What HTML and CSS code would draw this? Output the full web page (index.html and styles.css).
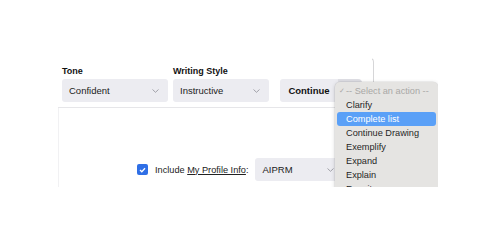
FILE: index.html
```html
<!DOCTYPE html>
<html lang="en">
<head>
  <meta charset="UTF-8">
  <title>Prompt Options</title>
  <link rel="stylesheet" href="styles.css">
</head>
<body>
  <div class="panel">
    <div class="toolbar">
      <div class="field">
        <label>Tone</label>
        <div class="select tone">
          <span>Confident</span>
          <svg class="chev" width="7" height="4" viewBox="0 0 7 4"><path d="M0.5 0.5 L3.5 3.3 L6.5 0.5" fill="none" stroke="#9a9aa2" stroke-width="0.9"/></svg>
        </div>
      </div>
      <div class="field">
        <label>Writing Style</label>
        <div class="select style">
          <span>Instructive</span>
          <svg class="chev" width="7" height="4" viewBox="0 0 7 4"><path d="M0.5 0.5 L3.5 3.3 L6.5 0.5" fill="none" stroke="#9a9aa2" stroke-width="0.9"/></svg>
        </div>
      </div>
      <div class="continue">
        <button class="go">Continue</button>
        <button class="more"></button>
      </div>
      <div class="edge"></div>
    </div>

    <div class="lower">
      <div class="profile">
        <span class="check">
          <svg width="7" height="6" viewBox="0 0 7 6"><path d="M1 3 L2.8 4.7 L6 1.2" fill="none" stroke="#fff" stroke-width="1.3"/></svg>
        </span>
        <span class="include">Include <u>My Profile Info</u>:</span>
        <div class="select aiprm">
          <span>AIPRM</span>
          <svg class="chev" width="7" height="4" viewBox="0 0 7 4"><path d="M0.5 0.5 L3.5 3.3 L6.5 0.5" fill="none" stroke="#9a9aa2" stroke-width="0.9"/></svg>
        </div>
      </div>
    </div>

    <!-- open native menu of the continue button -->
    <ul class="menu">
      <li class="placeholder"><span class="tick">✓</span>-- Select an action --</li>
      <li>Clarify</li>
      <li class="active">Complete list</li>
      <li>Continue Drawing</li>
      <li>Exemplify</li>
      <li>Expand</li>
      <li>Explain</li>
      <li>Rewrite</li>
    </ul>
  </div>
</body>
</html>
```

FILE: styles.css
```css
* {
  margin: 0;
  padding: 0;
  box-sizing: border-box;
}
body {
  background-color: #fff;
  font-family: "Liberation Sans", Arial, Helvetica, sans-serif;
  color: #1a1a1a;
}
.panel {
  position: relative;
  margin-left: 58px;
  margin-top: 58px;
  width: 380px;
  height: 129px;
  overflow: hidden;
}
.toolbar {
  display: flex;
  align-items: flex-end;
  height: 50px;
  padding-left: 4px;
  padding-bottom: 5px;
  border-bottom: 1px solid #e6e6e9;
}
.field {
  display: flex;
  flex-direction: column;
  margin-right: 5px;
}
.field label {
  font-size: 9px;
  font-weight: bold;
  line-height: 11px;
  margin-bottom: 2px;
  color: #111;
}
.select {
  display: flex;
  align-items: center;
  justify-content: space-between;
  height: 23px;
  padding: 0 9px 0 7px;
  background-color: #ececf1;
  border-radius: 3px;
  font-size: 9.5px;
  color: #222;
}
.select.tone {
  width: 106px;
}
.select.style {
  width: 96px;
}
.select.aiprm {
  width: 88px;
}
.chev {
  display: block;
}
.continue {
  display: flex;
  margin-left: 6px;
}
.continue button {
  border: none;
  height: 23px;
  background-color: #ececf1;
  font-family: inherit;
  color: #111;
}
.go {
  width: 58px;
  font-size: 9.5px;
  font-weight: bold;
  border-radius: 3px 0 0 3px;
}
.more {
  width: 24px;
  background-color: #dedee4 !important;
  border-radius: 0 4px 4px 0;
}
.edge {
  align-self: stretch;
  width: 4px;
  margin-left: 8px;
  margin-bottom: -5px;
  border-top: 1px solid #d6d6d8;
  border-right: 1px solid #d6d6d8;
  border-top-right-radius: 4px;
  clip-path: inset(0 0 0 2px);
}
.lower {
  height: 79px;
  border-left: 1px solid #f1f1f3;
  padding-top: 50px;
  padding-left: 78px;
}
.profile {
  display: flex;
  align-items: center;
}
.check {
  display: flex;
  align-items: center;
  justify-content: center;
  width: 11px;
  height: 11px;
  background-color: #2f6fe6;
  border-radius: 2px;
  margin-right: 7px;
}
.include {
  font-size: 9.2px;
  color: #222;
  margin-right: 7px;
}
.include u {
  text-underline-offset: 1px;
}
.menu {
  position: absolute;
  left: 277px;
  top: 24px;
  width: 103px;
  height: 130px;
  list-style: none;
  padding: 2px 2px 0;
  background-color: #e5e4e2;
  border-radius: 5px;
  box-shadow: 0 1px 4px rgba(0, 0, 0, 0.18), 0 0 0 0.5px rgba(0, 0, 0, 0.08);
  font-size: 9.2px;
  color: #262626;
}
.menu li {
  height: 14px;
  line-height: 14px;
  padding-left: 9px;
  border-radius: 3px;
  white-space: nowrap;
}
.menu .placeholder {
  position: relative;
  color: #a9a8a6;
}
.tick {
  position: absolute;
  left: 2px;
  font-size: 7px;
}
.menu .active {
  background-color: #5aa0f7;
  color: #fff;
}
```
